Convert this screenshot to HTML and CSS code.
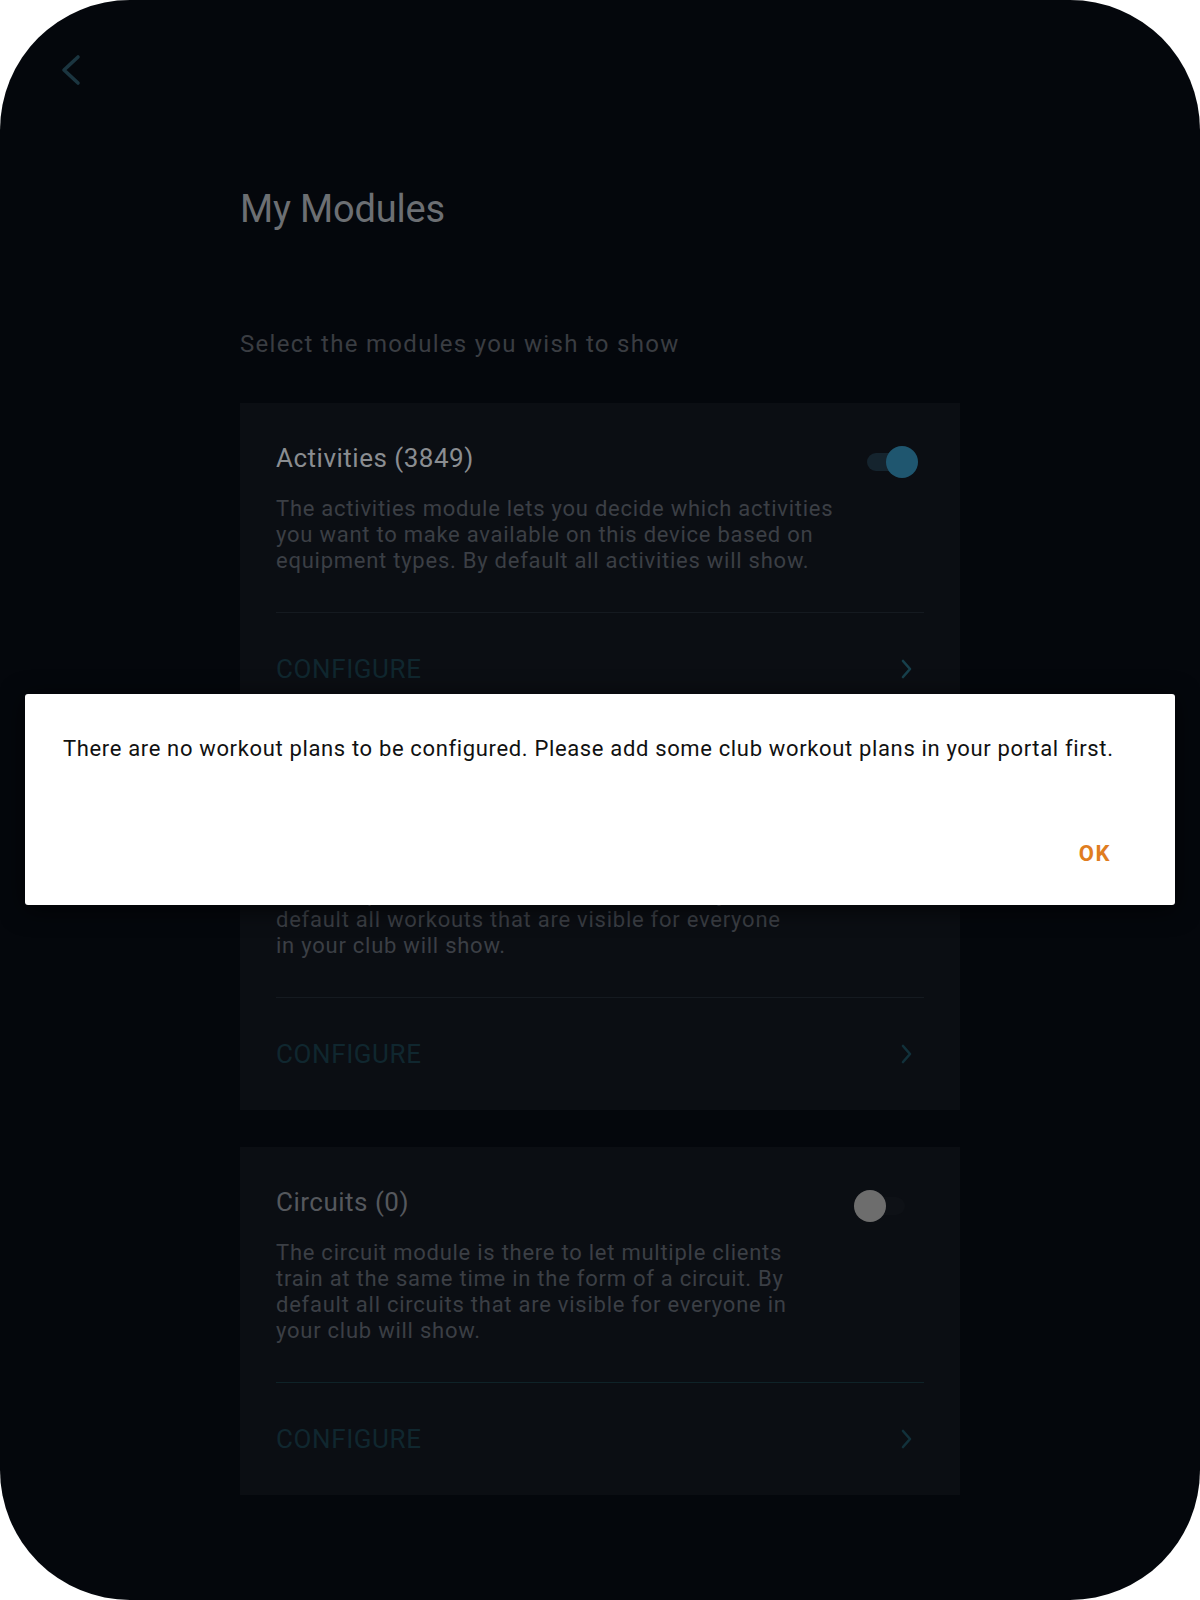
FILE: index.html
```html
<!DOCTYPE html>
<html lang="en">
<head>
    <meta charset="UTF-8">
    <meta name="viewport" content="width=device-width, initial-scale=1.0">
    <title>My Modules</title>
    <link rel="stylesheet" href="styles.css">
</head>
<body>
    <div class="device">
        <!-- Top bar -->
        <div class="topbar">
            <button class="back-btn" aria-label="Back">
                <svg width="22" height="32" viewBox="0 0 22 32" aria-hidden="true">
                    <polyline points="18,3 4,16 18,29" fill="none" stroke="currentColor" stroke-width="3.6" stroke-linecap="round" stroke-linejoin="round"/>
                </svg>
            </button>
        </div>

        <div class="content">
            <h1 class="page-title">My Modules</h1>
            <p class="page-subtitle">Select the modules you wish to show</p>

            <div class="module-list">
                <!-- Activities -->
                <div class="module-card">
                    <div class="card-head">
                        <h2 class="card-title">Activities (3849)</h2>
                        <span class="switch on" role="switch" aria-checked="true"><span class="thumb"></span></span>
                    </div>
                    <p class="card-desc">The activities module lets you decide which activities<br>you want to make available on this device based on<br>equipment types. By default all activities will show.</p>
                    <div class="configure-row">
                        <span class="configure-label">CONFIGURE</span>
                        <svg class="chevron" width="12" height="20" viewBox="0 0 12 20" aria-hidden="true">
                            <polyline points="3,2 10,10 3,18" fill="none" stroke="currentColor" stroke-width="2.6" stroke-linecap="round" stroke-linejoin="round"/>
                        </svg>
                    </div>
                </div>

                <!-- Workout plans -->
                <div class="module-card">
                    <div class="card-head">
                        <h2 class="card-title">Workout Plans (0)</h2>
                        <span class="switch on" role="switch" aria-checked="true"><span class="thumb"></span></span>
                    </div>
                    <p class="card-desc">The workout plans module lets you decide which<br>workout plans are shown on this device. By<br>default all workouts that are visible for everyone<br>in your club will show.</p>
                    <div class="configure-row">
                        <span class="configure-label">CONFIGURE</span>
                        <svg class="chevron dim" width="12" height="20" viewBox="0 0 12 20" aria-hidden="true">
                            <polyline points="3,2 10,10 3,18" fill="none" stroke="currentColor" stroke-width="2.6" stroke-linecap="round" stroke-linejoin="round"/>
                        </svg>
                    </div>
                </div>

                <!-- Circuits -->
                <div class="module-card disabled">
                    <div class="card-head">
                        <h2 class="card-title">Circuits (0)</h2>
                        <span class="switch" role="switch" aria-checked="false"><span class="thumb"></span></span>
                    </div>
                    <p class="card-desc">The circuit module is there to let multiple clients<br>train at the same time in the form of a circuit. By<br>default all circuits that are visible for everyone in<br>your club will show.</p>
                    <div class="configure-row">
                        <span class="configure-label">CONFIGURE</span>
                        <svg class="chevron dim" width="12" height="20" viewBox="0 0 12 20" aria-hidden="true">
                            <polyline points="3,2 10,10 3,18" fill="none" stroke="currentColor" stroke-width="2.6" stroke-linecap="round" stroke-linejoin="round"/>
                        </svg>
                    </div>
                </div>
            </div>
        </div>

        <!-- Alert dialog -->
        <div class="dialog" role="alertdialog" aria-modal="true">
            <p class="dialog-message">There are no workout plans to be configured. Please add some club workout plans in your portal first.</p>
            <div class="dialog-actions">
                <button class="dialog-button">OK</button>
            </div>
        </div>
    </div>
</body>
</html>
```

FILE: styles.css
```css
/* Page */
body, html {
    margin: 0;
    background-color: #ffffff;
    font-family: Roboto, "Noto Sans", Arial, sans-serif;
}

.device {
    position: relative;
    height: 1600px;
    border-radius: 130px;
    background-color: #04070c;
    overflow: hidden;
}

.topbar {
    display: flex;
    padding: 54px 60px 0;
}

.back-btn {
    display: flex;
    padding: 0;
    border: none;
    background: none;
    color: #1b3540;
    cursor: pointer;
}

.content {
    width: 720px;
    margin: 0 auto;
}

.page-title {
    margin: 100px 0 0;
    font-size: 38px;
    line-height: 46px;
    font-weight: 400;
    letter-spacing: -0.2px;
    color: #6c6f73;
}

.page-subtitle {
    margin: 96px 0 0;
    font-size: 24px;
    line-height: 32px;
    letter-spacing: 1.3px;
    color: #3a3d42;
}

/* Module cards */
.module-list {
    display: flex;
    flex-direction: column;
    gap: 37px;
    margin-top: 43px;
}

.module-card {
    padding: 39px 36px 0;
    background-color: #0b0e13;
}

.card-head {
    display: flex;
    justify-content: space-between;
    align-items: flex-start;
}

.card-title {
    margin: 0;
    font-size: 26px;
    line-height: 32px;
    font-weight: 400;
    letter-spacing: 0.5px;
    color: #8a8d91;
}

.disabled .card-title {
    color: #55585d;
}

.card-desc {
    margin: 22px 0 0;
    padding-bottom: 38px;
    border-bottom: 1px solid #151a20;
    font-size: 22px;
    line-height: 26px;
    letter-spacing: 0.75px;
    color: #3b3f45;
}

.disabled .card-desc {
    border-bottom-color: #0f2328;
}

.configure-row {
    display: flex;
    align-items: center;
    justify-content: space-between;
    height: 112px;
    padding-right: 12px;
}

.configure-label {
    font-size: 26px;
    line-height: 32px;
    letter-spacing: 0.6px;
    color: #10272f;
}

.chevron {
    color: #17404c;
}

.chevron.dim {
    color: #12313b;
}

/* Switch */
.switch {
    position: relative;
    width: 64px;
    height: 32px;
    margin: 4px 6px -4px 0;
}

.switch::before {
    content: "";
    position: absolute;
    left: 13px;
    top: 7px;
    width: 38px;
    height: 18px;
    border-radius: 9px;
    background-color: #0e1116;
}

.switch.on::before {
    background-color: #15242e;
}

.switch .thumb {
    position: absolute;
    top: 0;
    left: 0;
    width: 32px;
    height: 32px;
    border-radius: 50%;
    background-color: #6d6d6d;
}

.switch.on .thumb {
    left: 32px;
    background-color: #1f566f;
}

/* Dialog */
.dialog {
    position: absolute;
    left: 25px;
    top: 694px;
    width: 1150px;
    height: 211px;
    box-sizing: border-box;
    padding: 40px 48px 0 38px;
    background-color: #ffffff;
    border-radius: 3px;
    box-shadow: 0 4px 24px rgba(0, 0, 0, 0.7);
}

.dialog-message {
    margin: 0;
    font-size: 22px;
    line-height: 30px;
    letter-spacing: 0.65px;
    color: #111111;
}

.dialog-actions {
    display: flex;
    justify-content: flex-end;
    margin-top: 67px;
}

.dialog-button {
    padding: 8px 16px;
    border: none;
    background: none;
    font-family: Roboto, "Noto Sans", Arial, sans-serif;
    font-size: 22px;
    line-height: 30px;
    font-weight: 700;
    letter-spacing: 1.5px;
    color: #e07d1f;
    cursor: pointer;
}
```
